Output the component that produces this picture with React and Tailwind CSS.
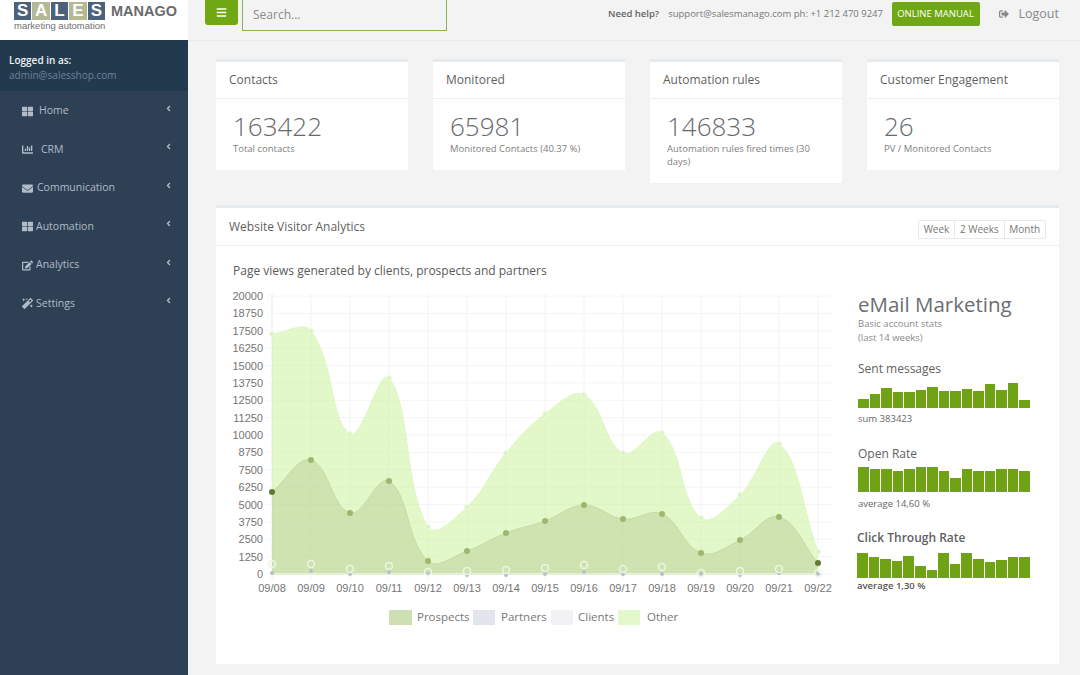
import { FaAngleLeft, FaBars, FaChartBar, FaEdit, FaEnvelope, FaMagic, FaSignOutAlt, FaThLarge } from 'react-icons/fa'

const font = { fontFamily: '"Open Sans", sans-serif' }

const menu = [
  { label: 'Home', icon: FaThLarge, gap: 'gap-[5px]' },
  { label: 'CRM', icon: FaChartBar, gap: 'gap-[7px]' },
  { label: 'Communication', icon: FaEnvelope, gap: 'gap-[3px]' },
  { label: 'Automation', icon: FaThLarge, gap: 'gap-[2px]' },
  { label: 'Analytics', icon: FaEdit, gap: 'gap-[2px]' },
  { label: 'Settings', icon: FaMagic, gap: 'gap-[2px]' },
]

const stats = [
  { title: 'Contacts', value: '163422', sub: 'Total contacts' },
  { title: 'Monitored', value: '65981', sub: 'Monitored Contacts (40.37 %)' },
  { title: 'Automation rules', value: '146833', sub: 'Automation rules fired times (30 days)' },
  { title: 'Customer Engagement', value: '26', sub: 'PV / Monitored Contacts' },
]

// chart data is in page pixels, read off the screenshot
const xs = Array.from({ length: 15 }, (_, i) => 272 + i * 39)
const days = ['09/08', '09/09', '09/10', '09/11', '09/12', '09/13', '09/14', '09/15', '09/16', '09/17', '09/18', '09/19', '09/20', '09/21', '09/22']
const ticks = [20000, 18750, 17500, 16250, 15000, 13750, 12500, 11250, 10000, 8750, 7500, 6250, 5000, 3750, 2500, 1250, 0]
const other = [333, 330, 433, 377, 526, 506, 452, 413, 394, 452, 432, 517, 494, 443, 551]
const prospects = [491, 459, 512, 480, 560, 550, 532, 520, 504, 518, 513, 552, 539, 516, 562]
const clients = [563, 563, 568, 565, 571, 570, 569, 567, 564, 568, 566, 572, 570, 568, 572]
const partners = [572, 570, 573, 571, 573, 574, 574, 573, 571, 573, 573, 573, 574, 572, 573]
const baseY = 573

// same spline as old Chart.js line charts
function spline(ys, t = 0.4) {
  const pts = ys.map((y, i) => ({ x: xs[i], y }))
  const ctrl = pts.map((p, i) => {
    const a = pts[i - 1] || p
    const b = pts[i + 1] || p
    const d1 = Math.hypot(p.x - a.x, p.y - a.y)
    const d2 = Math.hypot(b.x - p.x, b.y - p.y)
    const sum = d1 + d2 || 1
    const fa = (t * d1) / sum
    const fb = (t * d2) / sum
    return {
      inX: p.x - fa * (b.x - a.x),
      inY: Math.min(baseY, p.y - fa * (b.y - a.y)),
      outX: p.x + fb * (b.x - a.x),
      outY: Math.min(baseY, p.y + fb * (b.y - a.y)),
    }
  })
  let d = `M${pts[0].x} ${pts[0].y}`
  for (let i = 1; i < pts.length; i++) {
    d += ` C${ctrl[i - 1].outX} ${ctrl[i - 1].outY} ${ctrl[i].inX} ${ctrl[i].inY} ${pts[i].x} ${pts[i].y}`
  }
  return d
}

function area(ys) {
  return `${spline(ys)} L${xs[14]} ${baseY} L${xs[0]} ${baseY} Z`
}

function Chart() {
  return (
    <svg viewBox="228 285 610 315" className="block w-[610px] h-[315px]">
      {ticks.map((v, i) => {
        const y = 295 + i * 17.375
        return (
          <g key={v}>
            <line x1="266" x2="832" y1={y} y2={y} stroke="#f5f5f5" />
            <text x="263" y={y + 4} textAnchor="end" fontSize="11" fill="#757575" fontFamily="Liberation Sans, sans-serif">
              {v}
            </text>
          </g>
        )
      })}
      {days.map((d, i) => (
        <g key={d}>
          <line x1={xs[i]} x2={xs[i]} y1="292" y2="578" stroke={i === 0 ? '#ececec' : '#f4f4f4'} />
          <text x={xs[i]} y="591" textAnchor="middle" fontSize="11" fill="#757575" fontFamily="Liberation Sans, sans-serif">
            {d}
          </text>
        </g>
      ))}
      <path d={area(other)} fill="#c6f294" fillOpacity="0.5" />
      <path d={spline(other)} fill="none" stroke="#e0f6c6" />
      <path d={area(prospects)} fill="#a3b279" fillOpacity="0.3" />
      <path d={spline(prospects)} fill="none" stroke="#c6dba6" />
      <line x1="272" x2="818" y1="573" y2="573" stroke="#e6efd8" strokeWidth="2" />
      {other.map((y, i) => (
        <circle key={i} cx={xs[i]} cy={y} r="2.5" fill="#dcf2c2" stroke="#eefae0" />
      ))}
      {partners.map((y, i) => (
        <circle key={i} cx={xs[i]} cy={y} r="2" fill="#b9bdd0" />
      ))}
      {clients.map((y, i) => (
        <circle key={i} cx={xs[i]} cy={y} r="3.5" fill="none" stroke="#eef5e4" strokeWidth="1.5" />
      ))}
      {prospects.map((y, i) => (
        <circle key={i} cx={xs[i]} cy={y} r="3" fill={i === 0 || i === 14 ? '#5f7c2c' : '#9db86e'} />
      ))}
    </svg>
  )
}

function Bars({ data, className }) {
  return (
    <div className={`flex items-end gap-px h-[26px] ${className}`}>
      {data.map((h, i) => (
        <div key={i} className="flex-1 bg-[#6fa313]" style={{ height: h }} />
      ))}
    </div>
  )
}

const sent = [9, 13.7, 20.3, 15.7, 15.7, 18, 21.3, 16.7, 16.7, 19, 17, 23.7, 17.7, 25.3, 7.7]
const open = [25.3, 23, 23, 20.7, 23, 25.3, 25.3, 20.7, 13.7, 23, 20.7, 20.7, 23, 23, 20.7]
const ctr = [25.3, 20.7, 19.3, 16.7, 22.3, 12.3, 8, 25.3, 14, 25.3, 19.3, 16, 17.7, 20.7, 20.7]

export default function App() {
  return (
    <div style={font} className="flex h-[675px] w-[1080px] overflow-hidden bg-[#f3f3f4] text-[#676a6c]">
      <aside className="flex w-[188px] shrink-0 flex-col bg-[#2e4054]">
        <div className="h-10 bg-white pl-[14px]">
          <div className="flex items-center" style={{ fontFamily: '"Liberation Sans", sans-serif' }}>
            <div className="flex h-[18px] w-[91px] gap-px text-[17px] leading-[18px] font-bold text-white">
              <span className="flex-1 bg-[#4c617c] text-center">S</span>
              <span className="flex-1 bg-[#b4b994] text-center">A</span>
              <span className="flex-1 bg-[#4c617c] text-center">L</span>
              <span className="flex-1 bg-[#b4b994] text-center">E</span>
              <span className="flex-1 bg-[#4c617c] text-center">S</span>
            </div>
            <span className="ml-[6px] text-[14.5px] leading-[22px] font-bold text-[#6b6b6b]">MANAGO</span>
          </div>
          <div className="-mt-[2px] text-[9.5px] leading-[12px] text-[#6f6f6f]" style={{ fontFamily: '"Liberation Sans", sans-serif' }}>
            marketing automation
          </div>
        </div>
        <div className="h-[51px] bg-[#233a4e] pl-[9px] pt-[13px] text-[10px] leading-[15px]">
          <div className="font-semibold text-[#eef1f4]">Logged in as:</div>
          <div className="text-[#6a8298]">admin@salesshop.com</div>
        </div>
        <nav className="pt-px">
          {menu.map(({ label, icon: Icon, gap }) => (
            <div key={label} className="flex h-[38.5px] items-center justify-between pl-[21px] pr-[15px] text-[#b0bbc8]">
              <div className={`flex items-center text-[10.5px] ${gap}`}>
                <span className="flex w-[13px] justify-center">
                  <Icon size={11} />
                </span>
                {label}
              </div>
              <FaAngleLeft size={9} className="-mt-[6px]" />
            </div>
          ))}
        </nav>
      </aside>

      <div className="flex min-w-0 flex-1 flex-col">
        <header className="flex h-[41px] shrink-0 items-start whitespace-nowrap border-b border-[#e9e9ea] pl-[17px] pr-[21px]">
          <button className="flex h-[25px] w-[33px] items-center justify-center rounded-b-[3px] bg-[#6fa813] text-white">
            <FaBars size={11} />
          </button>
          <div className="ml-[4px] flex h-[31px] w-[205px] shrink-0 items-center border border-t-0 border-[#8cb44e] pl-[10px] text-[12px] text-[#8a8a8a]">
            Search...
          </div>
          <span className="ml-[161px] mt-[7px] text-[9.5px] leading-[14px] font-semibold text-[#666]">Need help?</span>
          <span className="ml-[9px] mt-[7px] text-[9.5px] leading-[14px] text-[#777]">support@salesmanago.com ph: +1 212 470 9247</span>
          <button className="ml-auto mt-[2px] h-[24px] w-[88px] rounded-[2px] bg-[#6fa813] text-[9.5px] text-white">ONLINE MANUAL</button>
          <div className="ml-[19px] mt-[5px] flex items-center gap-[10px] text-[12.5px] leading-[18px] text-[#888]">
            <FaSignOutAlt size={10} />
            Logout
          </div>
        </header>

        <main className="flex flex-col gap-[22px] pl-[28px] pr-[21px] pt-[18px]">
          <div className="grid grid-cols-4 items-start gap-x-[25px]">
            {stats.map((s) => (
              <section key={s.title} className="border-t-[3px] border-[#e7eaec] bg-white">
                <h3 className="flex h-[37px] items-center border-b border-[#eeeeee] px-[13px] text-[12px] font-normal text-[#5f5f5f]">{s.title}</h3>
                <div className="px-[17px] pb-[15px] pt-[12px]">
                  <div className="text-[26px] leading-[31px] font-light text-[#676a6c]">{s.value}</div>
                  <p className="text-[9.5px] leading-[13px] text-[#808080]">{s.sub}</p>
                </div>
              </section>
            ))}
          </div>

          <section className="h-[459px] border-t-[3px] border-[#e7eaec] bg-white">
            <div className="flex h-[38px] items-center justify-between border-b border-[#eeeeee] pl-[13px] pr-[13px]">
              <h3 className="text-[12px] font-normal text-[#5f5f5f]">Website Visitor Analytics</h3>
              <div className="mt-[6px] flex h-[19px] items-center rounded-[2px] border border-[#e7eaec] text-[10px] text-[#777]">
                <span className="border-r border-[#e7eaec] px-[4.8px] leading-[17px]">Week</span>
                <span className="border-r border-[#e7eaec] px-[4.8px] leading-[17px]">2 Weeks</span>
                <span className="px-[4.8px] leading-[17px]">Month</span>
              </div>
            </div>
            <div className="flex">
              <div className="w-[642px] pl-[12px]">
                <h4 className="ml-[5px] mt-[16px] text-[12px] leading-[18px] font-normal text-[#5a5a5a]">
                  Page views generated by clients, prospects and partners
                </h4>
                <div className="mt-[6px]">
                  <Chart />
                </div>
                <div className="ml-[161px] mt-[8px] flex h-[16px] items-center text-[11.5px] text-[#777]">
                  <span className="h-[15px] w-[23px] bg-[#cfdfb4]" />
                  <span className="ml-[5px] w-[56px]">Prospects</span>
                  <span className="h-[15px] w-[22px] bg-[#e2e4ee]" />
                  <span className="ml-[6px] w-[50px]">Partners</span>
                  <span className="h-[15px] w-[22px] bg-[#f2f2f4]" />
                  <span className="ml-[5px] w-[40px]">Clients</span>
                  <span className="h-[15px] w-[22px] bg-[#e4f8cd]" />
                  <span className="ml-[7px]">Other</span>
                </div>
              </div>
              <div className="w-[172px] pt-[44px]">
                <h2 className="text-[20.5px] leading-[28px] font-normal text-[#6b6e70]">eMail Marketing</h2>
                <p className="-mt-[1px] text-[9.5px] leading-[14px] text-[#8a8a8a]">
                  Basic account stats
                  <br />
                  (last 14 weeks)
                </p>
                <h4 className="mt-[15px] text-[12px] leading-[18px] font-normal text-[#5f5f5f]">Sent messages</h4>
                <Bars data={sent} className="mt-[4px]" />
                <p className="mt-[4px] text-[9.5px] leading-[14px] text-[#666]">sum 383423</p>
                <h4 className="mt-[19px] text-[12px] leading-[18px] font-normal text-[#5f5f5f]">Open Rate</h4>
                <Bars data={open} className="mt-[3px]" />
                <p className="mt-[5px] text-[9.5px] leading-[14px] text-[#666]">average 14,60 %</p>
                <h4 className="-ml-px mt-[18px] text-[12px] leading-[18px] font-semibold text-[#5f5f5f]">Click Through Rate</h4>
                <Bars data={ctr} className="-ml-px mt-[5px]" />
                <p className="-ml-px mt-px text-[9.5px] leading-[14px] font-semibold text-[#555]">average 1,30 %</p>
              </div>
            </div>
          </section>
        </main>
      </div>
    </div>
  )
}
